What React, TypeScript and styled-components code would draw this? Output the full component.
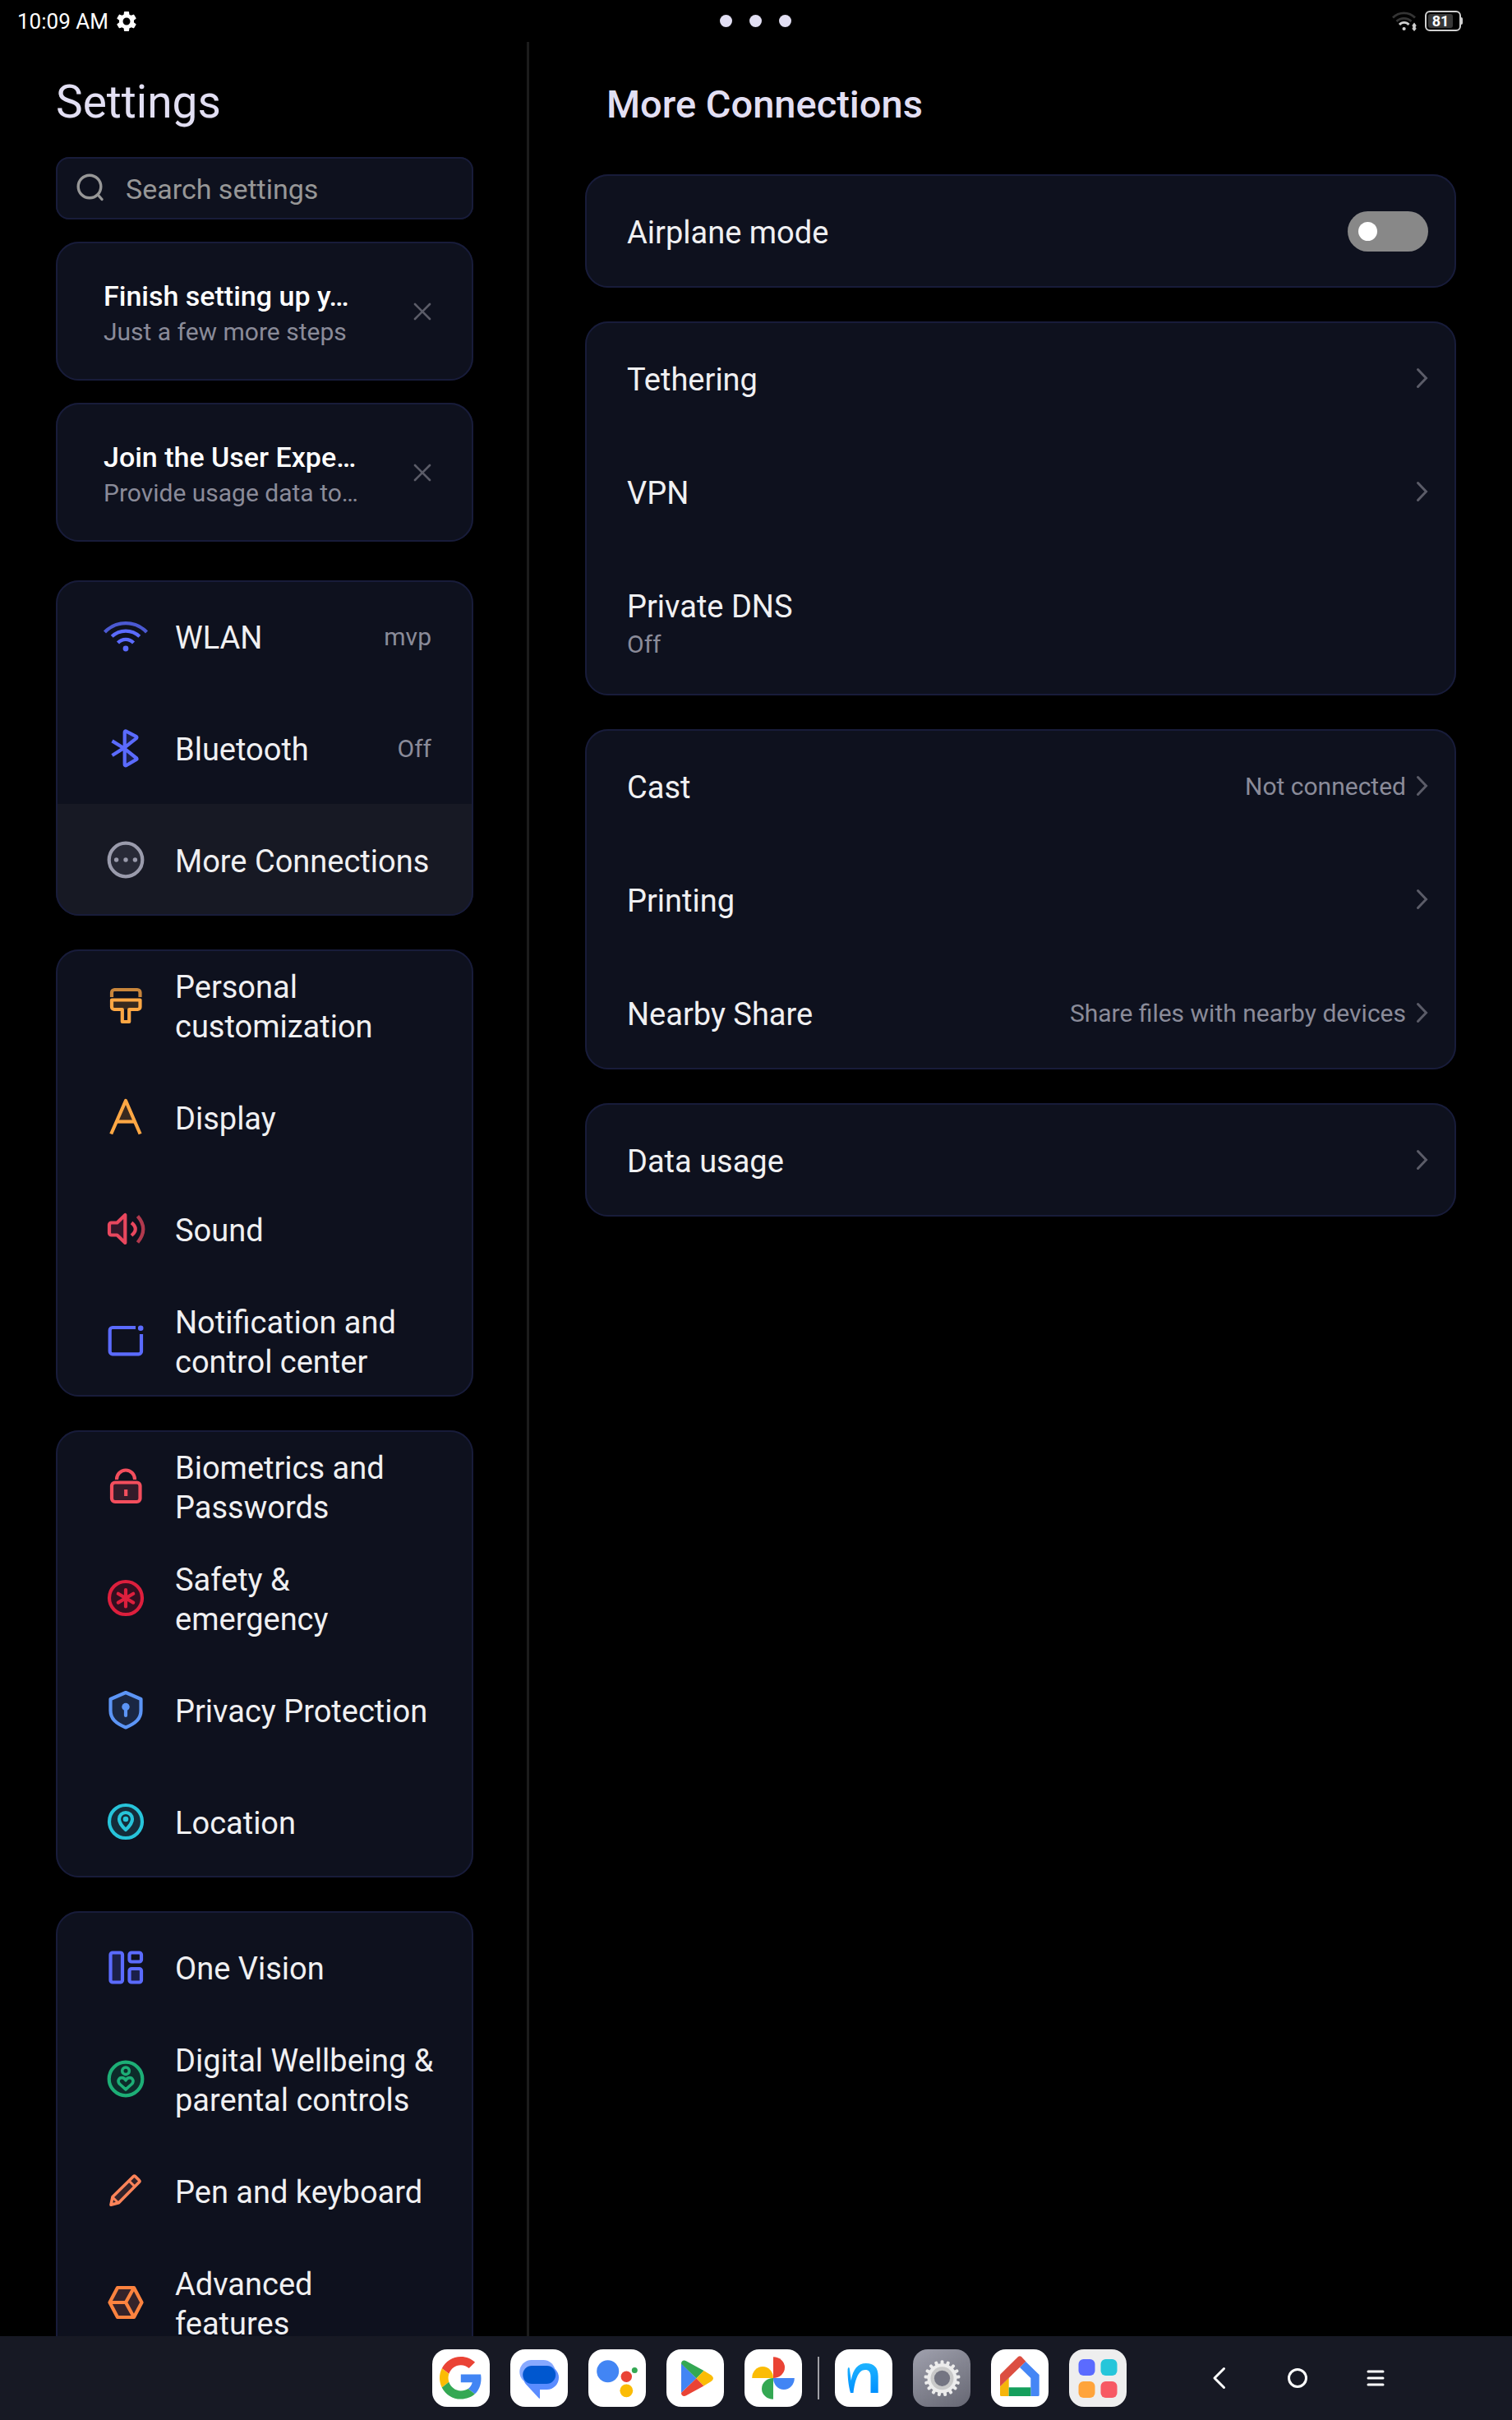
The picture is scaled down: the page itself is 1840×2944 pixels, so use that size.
import React from 'react';
import styled, { createGlobalStyle, css } from 'styled-components';
import { MdSettings } from 'react-icons/md';

const color = {
  page: '#000000',
  card: '#0e111e',
  cardEdge: '#181c3a',
  raised: '#171924',
  divider: '#1c1c1c',
  heading: '#e2dff3',
  text: '#f0f0f2',
  muted: '#8a8b99',
  faint: '#5b5c68',
  placeholder: '#979797',
  indigo: '#5b6bff',
};

const GlobalStyle = createGlobalStyle`
  *, *::before, *::after { box-sizing: border-box; }
  body {
    margin: 0;
    background: ${color.page};
    font-family: Roboto, "Noto Sans", sans-serif;
    color: ${color.text};
  }
  h1, h2, p, ul { margin: 0; padding: 0; }
  ul { list-style: none; }
  a { color: inherit; text-decoration: none; }
  button { border: 0; padding: 0; background: none; color: inherit; font: inherit; cursor: pointer; }
  svg { display: block; flex: none; }
`;

const Screen = styled.div`
  height: 100vh;
  display: flex;
  flex-direction: column;
`;

/* ---------- status bar ---------- */

const StatusBar = styled.header`
  display: grid;
  grid-template-columns: 1fr auto 1fr;
  align-items: center;
  height: 51px;
  flex: none;
  padding: 0 62px 0 21px;
`;

const StatusStart = styled.div`
  display: flex;
  align-items: center;
  gap: 7px;
  font-size: 26px;
  line-height: 32px;
  color: #ffffff;
`;

const StatusEnd = styled.div`
  display: flex;
  align-items: center;
  justify-content: flex-end;
  gap: 10px;
`;

const WindowDots = styled.button`
  display: flex;
  gap: 21px;
  margin-left: 39px;
`;

const Dot = styled.span`
  width: 15px;
  height: 15px;
  border-radius: 50%;
  background: ${color.heading};
`;

const Battery = styled.div`
  position: relative;
  display: flex;
  width: 44px;
  height: 25px;
  padding: 2px;
  border: 2px solid #cfcfcf;
  border-radius: 6px;

  &::after {
    content: '';
    position: absolute;
    top: 6px;
    right: -4px;
    width: 2px;
    height: 9px;
    border-radius: 0 2px 2px 0;
    background: #cfcfcf;
  }
`;

const BatteryLevel = styled.span`
  width: 30px;
  border-radius: 3px;
  background: #383838;
  color: #ffffff;
  font-size: 18px;
  font-weight: 700;
  line-height: 18px;
  text-align: center;
`;

/* ---------- panes ---------- */

const Panes = styled.div`
  display: flex;
  flex: 1;
  min-height: 0;
`;

const Sidebar = styled.aside`
  width: 35%;
  flex: none;
  padding: 39px 65px 0 68px;
  border-right: 3px solid ${color.divider};
  overflow: hidden;
`;

const Detail = styled.main`
  flex: 1;
  min-width: 0;
  padding: 39px 68px 0;
  overflow: hidden;
`;

const SidebarTitle = styled.h1`
  font-size: 55px;
  font-weight: 400;
  line-height: 68px;
  color: ${color.heading};
`;

const DetailTitle = styled.h2`
  padding: 3px 26px 0;
  font-size: 47px;
  font-weight: 500;
  line-height: 68px;
  color: ${color.heading};
`;

const cardSurface = css`
  background: ${color.card};
  outline: 2px solid ${color.cardEdge};
  outline-offset: -2px;
`;

const SearchBox = styled.label`
  ${cardSurface}
  display: flex;
  align-items: center;
  gap: 25px;
  height: 76px;
  margin-top: 33px;
  padding: 0 24px;
  border-radius: 16px;
`;

const SearchInput = styled.input`
  flex: 1;
  min-width: 0;
  padding: 2px 0 0;
  border: 0;
  outline: 0;
  background: none;
  color: ${color.text};
  font: 400 34px/44px Roboto, "Noto Sans", sans-serif;

  &::placeholder { color: ${color.placeholder}; opacity: 1; }
`;

const Banner = styled.section`
  ${cardSurface}
  display: flex;
  align-items: center;
  justify-content: space-between;
  height: 169px;
  margin-top: 27px;
  padding: 0 46px 0 58px;
  border-radius: 28px;
`;

const BannerText = styled.div`
  padding-top: 8px;
  min-width: 0;
`;

const BannerTitle = styled.p`
  font-size: 34px;
  font-weight: 500;
  line-height: 42px;
  color: #ffffff;
  white-space: nowrap;
`;

const BannerNote = styled.p`
  font-size: 30px;
  line-height: 46px;
  color: ${color.muted};
  white-space: nowrap;
`;

const CloseButton = styled.button`
  display: grid;
  place-items: center;
  width: 32px;
  height: 32px;
`;

const MenuGroups = styled.nav`
  display: flex;
  flex-direction: column;
  gap: 41px;
  margin-top: 47px;
`;

const Group = styled.ul`
  ${cardSurface}
  border-radius: 28px;
  overflow: hidden;
`;

const MenuLink = styled.a<{ $active?: boolean }>`
  display: flex;
  align-items: center;
  min-height: 136px;
  padding: 0 45px 0 55px;
  background: ${(p) => (p.$active ? color.raised : 'transparent')};
`;

const Label = styled.span`
  padding-top: 4px;
  font-size: 38px;
  line-height: 48px;
  color: ${color.text};
`;

const MenuLabel = styled(Label)`
  flex: 1;
  margin-left: 30px;
  white-space: pre-line;
`;

const Value = styled.span`
  padding-top: 2px;
  font-size: 30px;
  line-height: 40px;
  color: ${color.muted};
  white-space: nowrap;
`;

const MenuValue = styled(Value)`
  padding-right: 6px;
`;

/* ---------- detail rows ---------- */

const DetailGroups = styled.div`
  display: flex;
  flex-direction: column;
  gap: 41px;
  margin-top: 51px;
`;

const rowLayout = css`
  display: flex;
  align-items: center;
  justify-content: space-between;
  min-height: 138px;
  padding: 0 34px 0 51px;
`;

const DetailLink = styled.a`
  ${rowLayout}
`;

const SwitchRow = styled.label`
  ${rowLayout}
`;

const StackedLink = styled.a`
  display: flex;
  flex-direction: column;
  min-height: 179px;
  padding: 43px 34px 0 51px;
`;

const RowEnd = styled.span`
  display: flex;
  align-items: center;
  gap: 12px;
`;

const Switch = styled.input`
  appearance: none;
  display: flex;
  align-items: center;
  width: 98px;
  height: 49px;
  margin: 0;
  padding: 0 13px;
  border-radius: 25px;
  background: #888888;
  cursor: pointer;

  &::before {
    content: '';
    width: 23px;
    height: 23px;
    border-radius: 50%;
    background: #ffffff;
  }

  &:checked { background: ${color.indigo}; justify-content: flex-end; }
`;

/* ---------- taskbar ---------- */

const Taskbar = styled.footer`
  display: flex;
  align-items: center;
  justify-content: flex-end;
  gap: 65px;
  flex: none;
  height: 102px;
  padding-right: 119px;
  background: ${color.raised};
`;

const Dock = styled.div`
  display: flex;
  align-items: center;
  gap: 19px;
`;

const DockGroup = styled.div`
  display: flex;
  gap: 25px;
`;

const DockSeparator = styled.span`
  width: 2px;
  height: 52px;
  background: #a0a0a6;
`;

const AppButton = styled.button<{ $tile?: string }>`
  width: 70px;
  height: 70px;
  border-radius: 18px;
  background: ${(p) => p.$tile ?? '#ffffff'};
`;

const NavButtons = styled.div`
  display: flex;
`;

const NavButton = styled.button`
  display: grid;
  place-items: center;
  width: 95px;
  height: 70px;
`;

/* ---------- icons ---------- */

type IconProps = { stroke: string; children: React.ReactNode };

const RowIcon = ({ stroke, children }: IconProps) => (
  <svg width="60" height="60" viewBox="0 0 60 60" fill="none" stroke={stroke} strokeWidth="4.2" aria-hidden="true">
    {children}
  </svg>
);

const WlanIcon = () => (
  <RowIcon stroke={color.indigo}>
    <path d="M4.5 25a35.5 35.5 0 0 1 51 0" strokeOpacity=".8" />
    <path d="M13.2 30.3a24.4 24.4 0 0 1 33.6 0" />
    <path d="M20.5 38a12.8 12.8 0 0 1 19 0" />
    <circle cx="30" cy="45" r="3.4" fill={color.indigo} stroke="none" />
  </RowIcon>
);

const BluetoothIcon = () => (
  <RowIcon stroke={color.indigo}>
    <path d="M28.7 30V9.5L43.3 17.4ZM28.7 30V51.3L43.3 43Z" fill="#1a1f48" stroke="none" />
    <path d="M13.5 21.4L28.7 30.8L43.3 42.5Q43.8 43.3 43 43.9L30.5 51.2Q28.7 51.6 28.7 50V11Q28.7 9 30.5 9.6L43 16.2Q43.8 17 43 18.2L28.7 29.4L13.5 39" strokeLinejoin="round" />
  </RowIcon>
);

const MoreIcon = () => (
  <RowIcon stroke="#9a9bac">
    <circle cx="30" cy="30" r="20.3" fill="#282a37" />
    <g fill="#9a9bac" stroke="none">
      <circle cx="18.6" cy="30" r="2.7" />
      <circle cx="30" cy="30" r="2.7" />
      <circle cx="41.4" cy="30" r="2.7" />
    </g>
  </RowIcon>
);

const BrushIcon = () => (
  <RowIcon stroke="#fda744">
    <path d="M13 20V14.5a3.5 3.5 0 0 1 3.5-3.5H44a3.5 3.5 0 0 1 3.5 3.5V20" strokeOpacity=".78" />
    <path d="M13 23.5H47.5V32a3 3 0 0 1-3 3H16a3 3 0 0 1-3-3Z" fill="#37291f" stroke="none" />
    <path d="M13 23.5H47.5V32a3 3 0 0 1-3 3H34.2V50H25.8V35H16a3 3 0 0 1-3-3Z" strokeLinejoin="round" />
  </RowIcon>
);

const DisplayIcon = () => (
  <RowIcon stroke="#fda744">
    <path d="M19 35.5L30 10L41 35.5Z" fill="#37291f" stroke="none" />
    <path d="M12.2 50.5L30 10L47.6 50.5" strokeLinejoin="round" />
    <path d="M19 35.5H41" />
  </RowIcon>
);

const SoundIcon = () => (
  <RowIcon stroke="#e8475e">
    <path d="M10 25a2.5 2.5 0 0 1 2.5-2.5H19.5L29.3 13V47L19.5 37.5H12.5A2.5 2.5 0 0 1 10 35Z" fill="#33172a" strokeLinejoin="round" />
    <path d="M37 22.5Q46.5 30 37 38" />
    <path d="M44.5 14.5Q58 30 44.5 46.5" strokeOpacity=".75" />
  </RowIcon>
);

const NotificationIcon = () => (
  <RowIcon stroke={color.indigo}>
    <path d="M42 14H14a3.3 3.3 0 0 0-3.3 3.3V43a3.3 3.3 0 0 0 3.3 3.3H45.7a3.3 3.3 0 0 0 3.3-3.3V22" />
    <circle cx="48.2" cy="14.8" r="3.3" fill={color.indigo} stroke="none" />
  </RowIcon>
);

const LockIcon = () => (
  <RowIcon stroke="#f34e5d">
    <path d="M19 22V21.5a11 11 0 0 1 22 0V22" />
    <rect x="13" y="25.5" width="34.5" height="23.5" rx="4" fill="#341b2a" />
    <path d="M30.2 34V42" />
  </RowIcon>
);

const SafetyIcon = () => (
  <RowIcon stroke="#dd1f3d">
    <circle cx="30" cy="30" r="20" fill="#330f20" />
    <path d="M30 20V40.5M20.8 24.8L39.2 35.6M39.2 24.8L20.8 35.6" strokeLinecap="round" />
  </RowIcon>
);

const PrivacyIcon = () => (
  <RowIcon stroke="#5c95f6">
    <path d="M30 9L48.5 17V31C48.5 41 42 46.5 30 51.5C18 46.5 11.5 41 11.5 31V17Z" fill="#1a2743" strokeLinejoin="round" />
    <circle cx="30" cy="26.5" r="4.7" fill="#5c95f6" stroke="none" />
    <path d="M30 28V37" strokeLinecap="round" />
  </RowIcon>
);

const LocationIcon = () => (
  <RowIcon stroke="#27c4da">
    <circle cx="30" cy="30" r="20" fill="#142c3a" />
    <path d="M30 40C24 34.5 22 31 22 27a8 8 0 0 1 16 0C38 31 36 34.5 30 40Z" strokeLinejoin="round" />
    <circle cx="30" cy="27" r="3.3" fill="#27c4da" stroke="none" />
  </RowIcon>
);

const VisionIcon = () => (
  <RowIcon stroke={color.indigo}>
    <rect x="11.5" y="12.5" width="14.5" height="36" rx="2.5" fill="#1b2048" />
    <rect x="34.5" y="12.5" width="14.5" height="11" rx="2.5" />
    <rect x="34.5" y="32" width="14.5" height="16.5" rx="2.5" fill="#1b2048" />
  </RowIcon>
);

const WellbeingIcon = () => (
  <RowIcon stroke="#1dae76">
    <circle cx="30" cy="30" r="20.3" fill="#0d2b2a" />
    <circle cx="30" cy="20.3" r="4.3" strokeWidth="3.6" />
    <path d="M30 42.8L22.3 36C19.4 32.4 22 28.6 25.2 28.6C27.4 28.6 29 29.8 30 31.8C31 29.8 32.6 28.6 34.8 28.6C38 28.6 40.6 32.4 37.7 36Z" strokeWidth="3.6" strokeLinejoin="round" />
  </RowIcon>
);

const PenIcon = () => (
  <RowIcon stroke="#ff8459">
    <path d="M12 47.2L14 37.5L39.5 12.5Q40.5 11.6 41.5 12.5L46.5 17.6Q47.4 18.6 46.5 19.5L21.5 44.8Z" fill="#33232a" strokeWidth="3.6" strokeLinejoin="round" />
    <path d="M34 18L41 25M14.5 38.5L20.8 44.8" strokeWidth="3" />
  </RowIcon>
);

const AdvancedIcon = () => (
  <RowIcon stroke="#fd833f">
    <path d="M10.5 30L20 12H40L49.5 30L40 48H20Z" fill="#35232a" strokeLinejoin="round" />
    <path d="M10.5 30H30L40 12M30 30L40 48" />
  </RowIcon>
);

const Chevron = () => (
  <svg width="15" height="26" viewBox="0 0 15 26" fill="none" stroke={color.faint} strokeWidth="3" strokeLinecap="round" aria-hidden="true">
    <path d="M2.5 2.5L12.5 13L2.5 23.5" />
  </svg>
);

const CloseIcon = () => (
  <svg width="22" height="22" viewBox="0 0 22 22" stroke={color.faint} strokeWidth="2.6" strokeLinecap="round" aria-hidden="true">
    <path d="M2 2L20 20M20 2L2 20" />
  </svg>
);

const SearchIcon = () => (
  <svg width="36" height="36" viewBox="0 0 36 36" fill="none" stroke={color.placeholder} strokeWidth="3.4" strokeLinecap="round" aria-hidden="true">
    <circle cx="17" cy="16" r="13.8" />
    <path d="M28.5 27.5L32 31.5" />
  </svg>
);

const StatusWifi = () => (
  <svg width="30" height="25" viewBox="0 0 30 25" fill="none" strokeWidth="2.8" role="img" aria-label="Wi-Fi">
    <path d="M1 8.5a19 19 0 0 1 27 0" stroke="#343434" />
    <path d="M5.5 13a13 13 0 0 1 18 0" stroke="#343434" />
    <path d="M9 17a7.5 7.5 0 0 1 11.5 0" stroke="#cfcfcf" />
    <circle cx="14.6" cy="22" r="2.1" fill="#cfcfcf" />
    <path d="M27 14.5L30 18.5H28.8V21.500H30L27 25L24 21.500H25.200V18.500H24Z" fill="#cfcfcf" />
  </svg>
);

/* ---------- dock logos ---------- */

const Logo = ({ children }: { children: React.ReactNode }) => (
  <svg width="70" height="70" viewBox="0 0 70 70" aria-hidden="true">{children}</svg>
);

const GoogleLogo = () => (
  <Logo>
    <g transform="translate(9 9) scale(1.075)">
      <path fill="#ea4335" d="M24 9.5c3.54 0 6.71 1.22 9.21 3.6l6.85-6.85C35.9 2.38 30.47 0 24 0 14.62 0 6.51 5.38 2.56 13.22l7.98 6.19C12.43 13.72 17.74 9.5 24 9.5z" />
      <path fill="#4285f4" d="M46.98 24.55c0-1.57-.15-3.09-.38-4.55H24v9.02h12.94c-.58 2.96-2.26 5.48-4.78 7.18l7.73 6c4.51-4.18 7.09-10.36 7.09-17.65z" />
      <path fill="#fbbc05" d="M10.53 28.59c-.48-1.45-.76-2.99-.76-4.59s.27-3.14.76-4.59l-7.98-6.19C.92 16.46 0 20.12 0 24c0 3.88.92 7.54 2.56 10.78l7.97-6.19z" />
      <path fill="#34a853" d="M24 48c6.48 0 11.93-2.13 15.89-5.81l-7.73-6c-2.15 1.45-4.92 2.3-8.16 2.3-6.26 0-11.57-4.22-13.47-9.91l-7.98 6.19C6.51 42.62 14.62 48 24 48z" />
    </g>
  </Logo>
);

const MessagesLogo = () => (
  <Logo>
    <rect x="11.3" y="13" width="43.4" height="29" rx="14.5" fill="#87a9ff" />
    <path d="M28 20H44.5a14.5 14.5 0 0 1 0 29H36V59Q36 60.6 34.8 59.5L19 42.5C13 35 17 20 28 20Z" fill="#5a8cff" />
    <rect x="15.2" y="20" width="40" height="22" rx="11" fill="#0057cf" />
  </Logo>
);

const AssistantLogo = () => (
  <Logo>
    <circle cx="23.7" cy="26.7" r="13.5" fill="#4285f4" />
    <circle cx="46.3" cy="33.3" r="6.7" fill="#ea4335" />
    <circle cx="46.3" cy="50.3" r="7.9" fill="#fbbc05" />
    <circle cx="56.3" cy="25.5" r="3.5" fill="#34a853" />
  </Logo>
);

const PlayLogo = () => (
  <Logo>
    <path d="M18 17V53L36.5 35.3Z" fill="#4285f4" />
    <path d="M18 17.5C18 13.5 21.5 12.7 24 14.2L45.5 26L36.5 35.3Z" fill="#34a853" />
    <path d="M18 53C18 57 21.5 57.8 24 56.3L45.5 44.5L36.5 35.3Z" fill="#ea4335" />
    <path d="M45.5 26L54.5 31.5Q59.5 35.3 54.5 39L45.5 44.5L36.5 35.3Z" fill="#fbbc05" />
  </Logo>
);

const PhotosLogo = () => (
  <Logo>
    <path d="M35 9.2a14 12.9 0 0 1 0 25.8Z" fill="#ea4335" />
    <path d="M9.2 35a12.9 14 0 0 1 25.8 0Z" fill="#fbbc05" />
    <path d="M60.8 35a12.9 14 0 0 1-25.8 0Z" fill="#4285f4" />
    <path d="M35 60.8a14 12.9 0 0 1 0-25.8Z" fill="#34a853" />
  </Logo>
);

const NeboLogo = () => (
  <Logo>
    <defs>
      <linearGradient id="nebo" x1="0" y1="0" x2="0" y2="1">
        <stop offset="0" stopColor="#1fb4ff" />
        <stop offset="1" stopColor="#0090ff" />
      </linearGradient>
    </defs>
    <path
      d="M15.6 24Q16.5 20.5 17.8 23L19.8 38C22 24 28 17 38 17C47.5 17 52.7 22 52.7 33V53H43.5V33C43.5 27.5 41 25 37 25C28 25 24.5 38 22.5 53H19C16.5 44 15.2 32 15.6 24Z"
      fill="url(#nebo)"
    />
  </Logo>
);

const GearLogo = () => (
  <Logo>
    <g transform="translate(35.5 35.3)">
      {Array.from({ length: 17 }, (_, i) => (
        <rect key={i} x="-2" y="-22" width="4" height="8" rx="1.6" fill="#ececec" transform={`rotate(${(i * 360) / 17})`} />
      ))}
      <circle r="18" fill="#ececec" />
      <circle r="14" fill="#c9c9c9" />
      <circle r="9.6" fill="#747582" />
    </g>
  </Logo>
);

const HomeLogo = () => (
  <Logo>
    <path d="M35 22L42 14.7L58.7 31V55.5Q58.7 57 57.2 57H48.3V35Z" fill="#4586f5" />
    <path d="M11 45.3L21.7 34.5V57H12.5Q11 57 11 55.5Z" fill="#f6b50a" />
    <rect x="21.7" y="46.3" width="26.6" height="10.7" fill="#159f5c" />
    <path d="M11 45.3V32Q11 30.8 12 29.8L33 9Q35 7.3 37 9L42.3 14.7Z" fill="#dc4e41" />
  </Logo>
);

const DrawerLogo = () => (
  <Logo>
    <rect x="11.5" y="12" width="20" height="20" rx="6" fill="#5b6bff" />
    <rect x="38.5" y="12" width="20" height="20" rx="6" fill="#26c6da" />
    <rect x="11.5" y="39" width="20" height="20" rx="6" fill="#ffa43b" />
    <rect x="38.5" y="39" width="20" height="20" rx="6" fill="#f75964" />
  </Logo>
);

/* ---------- data ---------- */

type MenuItem = { label: string; icon: React.ComponentType; value?: string; active?: boolean };

const menu: MenuItem[][] = [
  [
    { label: 'WLAN', icon: WlanIcon, value: 'mvp' },
    { label: 'Bluetooth', icon: BluetoothIcon, value: 'Off' },
    { label: 'More Connections', icon: MoreIcon, active: true },
  ],
  [
    { label: 'Personal customization', icon: BrushIcon },
    { label: 'Display', icon: DisplayIcon },
    { label: 'Sound', icon: SoundIcon },
    { label: 'Notification and control center', icon: NotificationIcon },
  ],
  [
    { label: 'Biometrics and Passwords', icon: LockIcon },
    { label: 'Safety & emergency', icon: SafetyIcon },
    { label: 'Privacy Protection', icon: PrivacyIcon },
    { label: 'Location', icon: LocationIcon },
  ],
  [
    { label: 'One Vision', icon: VisionIcon },
    { label: 'Digital Wellbeing & parental controls', icon: WellbeingIcon },
    { label: 'Pen and keyboard', icon: PenIcon },
    { label: 'Advanced\nfeatures', icon: AdvancedIcon },
  ],
];

const banners = [
  { title: 'Finish setting up y…', note: 'Just a few more steps' },
  { title: 'Join the User Expe…', note: 'Provide usage data to…' },
];

type App = { name: string; logo: React.ComponentType; tile?: string };

const pinnedApps: App[] = [
  { name: 'Google', logo: GoogleLogo },
  { name: 'Messages', logo: MessagesLogo },
  { name: 'Assistant', logo: AssistantLogo },
  { name: 'Play Store', logo: PlayLogo },
  { name: 'Photos', logo: PhotosLogo },
];

const recentApps: App[] = [
  { name: 'Nebo', logo: NeboLogo },
  { name: 'Settings', logo: GearLogo, tile: 'linear-gradient(150deg, #a0a1ae, #82838f 50%, #666773)' },
  { name: 'Home', logo: HomeLogo },
  { name: 'All apps', logo: DrawerLogo, tile: '#eeeeee' },
];

const NavRow = ({ label, value }: { label: string; value?: string }) => (
  <li>
    <DetailLink href="#">
      <Label>{label}</Label>
      <RowEnd>
        {value && <Value>{value}</Value>}
        <Chevron />
      </RowEnd>
    </DetailLink>
  </li>
);

const Apps = ({ apps }: { apps: App[] }) => (
  <DockGroup>
    {apps.map(({ name, logo: AppLogo, tile }) => (
      <AppButton key={name} type="button" aria-label={name} $tile={tile}>
        <AppLogo />
      </AppButton>
    ))}
  </DockGroup>
);

export default function App() {
  return (
    <Screen>
      <GlobalStyle />
      <StatusBar>
        <StatusStart>
          <span>10:09 AM</span>
          <MdSettings size={30} aria-hidden="true" />
        </StatusStart>
        <WindowDots type="button" aria-label="Window options">
          <Dot />
          <Dot />
          <Dot />
        </WindowDots>
        <StatusEnd>
          <StatusWifi />
          <Battery>
            <BatteryLevel>81</BatteryLevel>
          </Battery>
        </StatusEnd>
      </StatusBar>

      <Panes>
        <Sidebar>
          <SidebarTitle>Settings</SidebarTitle>
          <SearchBox>
            <SearchIcon />
            <SearchInput type="text" placeholder="Search settings" aria-label="Search settings" />
          </SearchBox>
          {banners.map((b) => (
            <Banner key={b.title}>
              <BannerText>
                <BannerTitle>{b.title}</BannerTitle>
                <BannerNote>{b.note}</BannerNote>
              </BannerText>
              <CloseButton type="button" aria-label="Dismiss">
                <CloseIcon />
              </CloseButton>
            </Banner>
          ))}
          <MenuGroups>
            {menu.map((items) => (
              <Group key={items[0].label}>
                {items.map(({ label, icon: Icon, value, active }) => (
                  <li key={label}>
                    <MenuLink href="#" $active={active} aria-current={active ? 'page' : undefined}>
                      <Icon />
                      <MenuLabel>{label}</MenuLabel>
                      {value && <MenuValue>{value}</MenuValue>}
                    </MenuLink>
                  </li>
                ))}
              </Group>
            ))}
          </MenuGroups>
        </Sidebar>

        <Detail>
          <DetailTitle>More Connections</DetailTitle>
          <DetailGroups>
            <Group>
              <li>
                <SwitchRow>
                  <Label>Airplane mode</Label>
                  <Switch type="checkbox" role="switch" />
                </SwitchRow>
              </li>
            </Group>
            <Group>
              <NavRow label="Tethering" />
              <NavRow label="VPN" />
              <li>
                <StackedLink href="#">
                  <Label>Private DNS</Label>
                  <Value>Off</Value>
                </StackedLink>
              </li>
            </Group>
            <Group>
              <NavRow label="Cast" value="Not connected" />
              <NavRow label="Printing" />
              <NavRow label="Nearby Share" value="Share files with nearby devices" />
            </Group>
            <Group>
              <NavRow label="Data usage" />
            </Group>
          </DetailGroups>
        </Detail>
      </Panes>

      <Taskbar>
        <Dock>
          <Apps apps={pinnedApps} />
          <DockSeparator />
          <Apps apps={recentApps} />
        </Dock>
        <NavButtons>
          <NavButton type="button" aria-label="Back">
            <svg width="26" height="28" viewBox="0 0 26 28" fill="none" stroke="#ffffff" strokeWidth="3" strokeLinecap="round" strokeLinejoin="round">
              <path d="M18.5 2.5L7 14L18.5 25.5" />
            </svg>
          </NavButton>
          <NavButton type="button" aria-label="Home">
            <svg width="24" height="24" viewBox="0 0 24 24" fill="none" stroke="#ffffff" strokeWidth="3">
              <circle cx="12" cy="12" r="10.5" />
            </svg>
          </NavButton>
          <NavButton type="button" aria-label="Recent apps">
            <svg width="22" height="22" viewBox="0 0 22 22" stroke="#ffffff" strokeWidth="3" strokeLinecap="round">
              <path d="M2 3H20M2 11H20M2 19H20" />
            </svg>
          </NavButton>
        </NavButtons>
      </Taskbar>
    </Screen>
  );
}
